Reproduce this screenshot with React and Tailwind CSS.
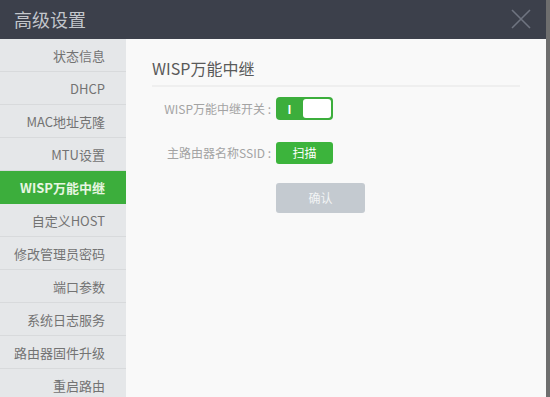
import React from "react";

const menu = [
    "状态信息",
    "DHCP",
    "MAC地址克隆",
    "MTU设置",
    "WISP万能中继",
    "自定义HOST",
    "修改管理员密码",
    "端口参数",
    "系统日志服务",
    "路由器固件升级",
    "重启路由",
];

export default function App() {
    const active = "WISP万能中继";

    return (
        <div
            className="flex h-[397px] w-[550px] overflow-hidden bg-[#6e6e6e]"
            style={{ fontFamily: '"Microsoft YaHei", "Noto Sans CJK SC", sans-serif' }}
        >
            <div className="flex w-[546px] flex-col">
                {/* header */}
                <div className="flex h-[39px] shrink-0 items-center justify-between bg-[#3c404b] pl-[14px] pr-[14px]">
                    <h1 className="text-[18px] text-[#c3c6cb]">高级设置</h1>
                    <svg width="22" height="22" viewBox="0 0 22 22" className="mt-[-1px]">
                        <path d="M2 2 L20 20 M20 2 L2 20" stroke="#6f7480" strokeWidth="1.6" />
                    </svg>
                </div>

                <div className="flex flex-1">
                    {/* sidebar */}
                    <div className="w-[126px] shrink-0 bg-[#e5e7e9]">
                        {menu.map((item) => (
                            <div
                                key={item}
                                className={`flex h-[33px] items-center justify-end border-b pr-[21px] pt-[2px] text-[13px] ${
                                    item === active
                                        ? "border-[#3cae3c] bg-[#3cae3c] font-bold text-[#e8f6e2]"
                                        : "border-[#d8dadc] text-[#737373]"
                                }`}
                            >
                                {item}
                            </div>
                        ))}
                    </div>

                    {/* content */}
                    <div className="flex-1 bg-[#f9f9f9] pl-[26px] pr-[26px] pt-[18px]">
                        <h2 className="border-b-2 border-[#efefef] pb-[6px] text-[16px] leading-[22px] text-[#5a5a5a]">
                            WISP万能中继
                        </h2>

                        <div className="mt-[10px] flex items-center">
                            <span className="w-[123px] pr-[4px] text-right text-[12px] text-[#a3a3a3]">
                                WISP万能中继开关 :
                            </span>
                            <div className="ml-[1px] flex h-[23px] w-[57px] items-center rounded-[4px] bg-[#3cae3c] p-[2px]">
                                <span className="w-[23px] text-center text-[12px] font-bold leading-none text-white">I</span>
                                <div className="ml-auto h-[19px] w-[28px] rounded-[3px] bg-white" />
                            </div>
                        </div>

                        <div className="mt-[22px] flex items-center">
                            <span className="w-[123px] pr-[4px] text-right text-[12px] text-[#a3a3a3]">
                                主路由器名称SSID :
                            </span>
                            <button className="ml-[1px] h-[22px] w-[57px] rounded-[3px] bg-[#3cb43c] text-[12px] text-white">
                                扫描
                            </button>
                        </div>

                        <div className="mt-[19px] pl-[124px]">
                            <button className="h-[30px] w-[89px] rounded-[3px] bg-[#c4cad0] text-[12px] text-[#f2f4f5]">
                                确认
                            </button>
                        </div>
                    </div>
                </div>
            </div>
        </div>
    );
}
